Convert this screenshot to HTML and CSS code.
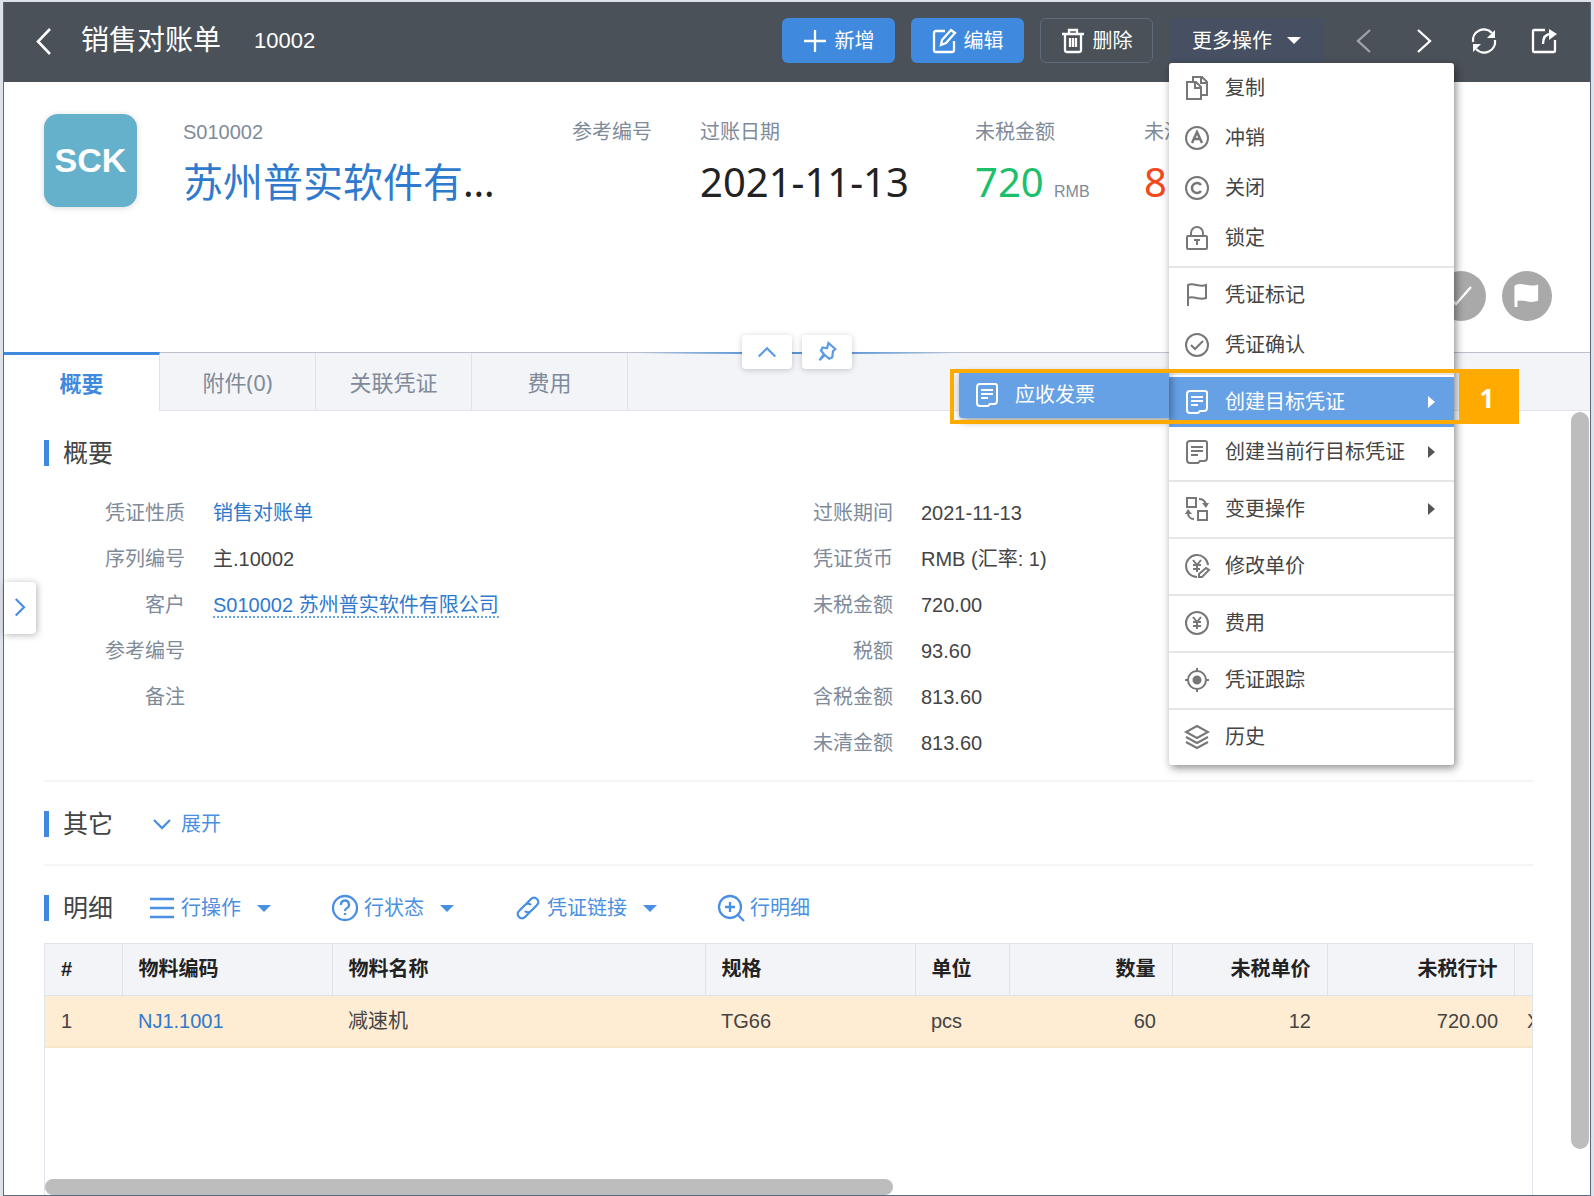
FILE: index.html
```html
<!DOCTYPE html>
<html lang="zh-CN">
<head>
  <meta charset="UTF-8" />
  <meta name="viewport" content="width=device-width, initial-scale=1" />
  <title>销售对账单 10002</title>
  <link rel="stylesheet" href="styles.css">
</head>
<body>
  <div class="window">
    <header class="topbar">
      <button class="back" aria-label="返回">
        <svg class="icon" viewBox="0 0 24 24"><path d="M19 0 7 12.500l12 12.500" stroke-width="2.600" /></svg>
      </button>
      <h1>销售对账单</h1>
      <span class="doc-no">10002</span>

      <div class="actions">
        <button class="btn btn-primary">
          <svg class="icon" viewBox="0 0 24 24"><path d="M12 1v22M1 12h22" /></svg>新增
        </button>
        <button class="btn btn-primary">
          <svg class="icon" viewBox="0 0 24 24"><path d="M13 2H4a2 2 0 0 0-2 2v17a2 2 0 0 0 2 2h16a2 2 0 0 0 2-2v-9M9 16l1-5L19 1l4 3-9 10z" /></svg>编辑
        </button>
        <button class="btn btn-ghost">
          <svg class="icon" viewBox="0 0 24 24"><path d="M1 5h22M8 5V1h8v4M4 5v16a2 2 0 0 0 2 2h12a2 2 0 0 0 2-2V5M9 9v9M12 9v9M15 9v9" /></svg>删除
        </button>
        <div class="more">
          <button class="btn btn-more">更多操作<span class="caret"></span></button>

          <ul class="menu">
            <li><button>
              <svg class="icon" viewBox="0 0 24 24"><path d="M2 6h9l5 5v12H2zM10 6v6h6M8 6V1h9l5 5v13h-6M16 1v6h6" /></svg>复制
            </button></li>
            <li><button>
              <svg class="icon" viewBox="0 0 24 24"><circle cx="12" cy="12" r="11" /><path d="m7 17 5-11 5 11M9 13h6" stroke-width="2.5" /></svg>冲销
            </button></li>
            <li><button>
              <svg class="icon" viewBox="0 0 24 24"><circle cx="12" cy="12" r="11" /><path d="M16 9a5 5 0 1 0 0 6" stroke-width="2.5" /></svg>关闭
            </button></li>
            <li><button>
              <svg class="icon" viewBox="0 0 24 24"><rect x="2" y="10" width="20" height="13" rx="1" /><path d="M6 10V7a6 6 0 0 1 12 0v3M9 14h6M12 14v5" /></svg>锁定
            </button></li>
            <li class="divider"></li>
            <li><button>
              <svg class="icon" viewBox="0 0 24 24"><path d="M3 23V2c6-3 11 3 18 0v13c-7 3-12-3-18 0" /></svg>凭证标记
            </button></li>
            <li><button>
              <svg class="icon" viewBox="0 0 24 24"><circle cx="12" cy="12" r="11" /><path d="m6 12 4 4 8-8" /></svg>凭证确认
            </button></li>
            <li class="divider"></li>
            <li class="active">
              <button>
                <svg class="icon" viewBox="0 0 24 24"><path d="M5 1h15a2 2 0 0 1 2 2v15a3 3 0 0 1-3 3h-4l-2 2H5a3 3 0 0 1-3-3V4a3 3 0 0 1 3-3zM6 7h12M6 11h12M6 15h7" /></svg>创建目标凭证<span class="arrow"></span>
              </button>
              <ul class="submenu">
                <li><button>
                  <svg class="icon" viewBox="0 0 24 24"><path d="M5 1h15a2 2 0 0 1 2 2v15a3 3 0 0 1-3 3h-4l-2 2H5a3 3 0 0 1-3-3V4a3 3 0 0 1 3-3zM6 7h12M6 11h12M6 15h7" /></svg>应收发票
                </button></li>
              </ul>
              <div class="callout"><span>1</span></div>
            </li>
            <li><button>
              <svg class="icon" viewBox="0 0 24 24"><path d="M5 1h15a2 2 0 0 1 2 2v15a3 3 0 0 1-3 3h-4l-2 2H5a3 3 0 0 1-3-3V4a3 3 0 0 1 3-3zM6 7h12M6 11h12M6 15h7" /></svg>创建当前行目标凭证<span class="arrow"></span>
            </button></li>
            <li class="divider"></li>
            <li><button>
              <svg class="icon" viewBox="0 0 24 24"><path d="M2 1h9v9H2zM13 14h9v9h-9zM14 2c4 0 6 2 7 5M9 22c-4 0-6-3-6-6" /><path d="M17 6h7l-3 5zM0 17h7l-4-5z" fill="currentColor" stroke="none" /></svg>变更操作<span class="arrow"></span>
            </button></li>
            <li class="divider"></li>
            <li><button>
              <svg class="icon" viewBox="0 0 24 24"><path d="M12 23A11 11 0 1 1 23 11M8 6l4 5 4-5M8 11h8M8 15h7M12 11v7M14 20l7-6 3 2-7 7h-3z" /></svg>修改单价
            </button></li>
            <li class="divider"></li>
            <li><button>
              <svg class="icon" viewBox="0 0 24 24"><circle cx="12" cy="12" r="11" /><path d="m8 6 4 5 4-5M8 11h8M8 15h8M12 11v7" /></svg>费用
            </button></li>
            <li class="divider"></li>
            <li><button>
              <svg class="icon" viewBox="0 0 24 24"><circle cx="12" cy="12" r="9" /><circle cx="12" cy="12" r="3.500" fill="currentColor" /><path d="M12 0v4M12 20v4M0 12h4M20 12h4" /></svg>凭证跟踪
            </button></li>
            <li class="divider"></li>
            <li><button>
              <svg class="icon" viewBox="0 0 24 24"><path d="m12 1 11 6-11 6L1 7zM1 12l11 6 11-6M1 17l11 6 11-6" /></svg>历史
            </button></li>
          </ul>
        </div>

        <div class="tools">
          <button aria-label="上一条" disabled>
            <svg class="icon" viewBox="0 0 24 24"><path d="M18 1 6 12l12 11" /></svg>
          </button>
          <button aria-label="下一条">
            <svg class="icon" viewBox="0 0 24 24"><path d="m6 1 12 11L6 23" /></svg>
          </button>
          <button aria-label="刷新">
            <svg class="icon" viewBox="0 0 24 24"><path d="M1 13A11 11 0 0 1 20 4M23 11A11 11 0 0 1 4 20" /><path d="M23 1v8h-8zM1 23v-8h8z" fill="currentColor" stroke="none" /></svg>
          </button>
          <button aria-label="分享">
            <svg class="icon" viewBox="0 0 24 24"><path d="M13 1H2a1 1 0 0 0-1 1v20a1 1 0 0 0 1 1h20a1 1 0 0 0 1-1V11M11 15c0-6 2-10 8-10" /><path d="m17 0 8 5-8 6z" fill="currentColor" stroke="none" /></svg>
          </button>
        </div>
      </div>
    </header>

    <section class="summary">
      <div class="avatar">SCK</div>
      <div class="facts">
        <div>
          <p class="fact-label">S010002</p>
          <p class="fact-value name"><a href="#">苏州普实软件有限公司</a></p>
        </div>
        <div>
          <p class="fact-label">参考编号</p>
        </div>
        <div>
          <p class="fact-label">过账日期</p>
          <p class="fact-value">2021-11-13</p>
        </div>
        <div>
          <p class="fact-label">未税金额</p>
          <p class="fact-value green">720 <small>RMB</small></p>
        </div>
        <div>
          <p class="fact-label">未清金额</p>
          <p class="fact-value red">813.60</p>
        </div>
      </div>
      <div class="flags">
        <button aria-label="确认"><svg class="icon" viewBox="0 0 24 24"><path d="m1 13 7 7L23 3" /></svg></button>
        <button aria-label="标记"><svg class="icon" viewBox="0 0 24 24"><path d="M2 23V2" stroke-width="3" /><path d="M2 2c7-3 12 3 21 0v14c-9 3-14-3-21 0z" fill="currentColor" /></svg></button>
      </div>
    </section>

    <nav class="tabs">
      <button class="tab current">概要</button>
      <button class="tab">附件(0)</button>
      <button class="tab">关联凭证</button>
      <button class="tab">费用</button>
      <div class="fold">
        <button aria-label="收起"><svg class="icon" viewBox="0 0 24 24"><path d="m1 18 11-11 11 11" /></svg></button>
        <button aria-label="固定"><svg class="icon" viewBox="0 0 24 24"><path d="m14 0 9 8-3 3-1 8-4 2-6-5-7 7 6-8-4-5 2-4 6 1z" /></svg></button>
      </div>
    </nav>

    <main class="body">
      <button class="drawer" aria-label="展开侧栏"><svg class="icon" viewBox="0 0 24 24"><path d="m5 0 11 11L5 22" /></svg></button>

      <div class="content">
        <section class="block overview">
          <div class="block-head"><h2>概要</h2></div>
          <div class="info">
            <dl>
              <dt>凭证性质</dt><dd><a href="#">销售对账单</a></dd>
              <dt>序列编号</dt><dd>主.10002</dd>
              <dt>客户</dt><dd><a class="dotted" href="#">S010002 苏州普实软件有限公司</a></dd>
              <dt>参考编号</dt><dd></dd>
              <dt>备注</dt><dd></dd>
            </dl>
            <dl>
              <dt>过账期间</dt><dd>2021-11-13</dd>
              <dt>凭证货币</dt><dd>RMB (汇率: 1)</dd>
              <dt>未税金额</dt><dd>720.00</dd>
              <dt>税额</dt><dd>93.60</dd>
              <dt>含税金额</dt><dd>813.60</dd>
              <dt>未清金额</dt><dd>813.60</dd>
            </dl>
          </div>
        </section>

        <section class="block">
          <div class="block-head">
            <h2>其它</h2>
            <button class="link-btn"><svg class="icon" viewBox="0 0 24 24"><path d="m4 8 8 8 8-8" /></svg>展开</button>
          </div>
        </section>

        <section class="block details">
          <div class="block-head">
            <h2>明细</h2>
            <button class="link-btn"><svg class="icon" viewBox="0 0 24 24"><path d="M0 3h24M0 12h24M0 21h24" /></svg>行操作<span class="caret"></span></button>
            <button class="link-btn"><svg class="icon" viewBox="0 0 24 24"><circle cx="12" cy="12" r="12" /><path d="M8 9a4 4 0 1 1 6 3q-2 1-2 3M12 17v2" /></svg>行状态<span class="caret"></span></button>
            <button class="link-btn"><svg class="icon" viewBox="0 0 24 24"><path d="m10 8 5-5a4 4 0 0 1 6 6l-6 6a4 4 0 0 1-6 0M14 16l-5 5a4 4 0 0 1-6-6l6-6a4 4 0 0 1 6 0" /></svg>凭证链接<span class="caret"></span></button>
            <button class="link-btn"><svg class="icon" viewBox="0 0 24 24"><circle cx="11" cy="11" r="11" /><path d="m18 18 7 7M11 6v10M6 11h10" /></svg>行明细</button>
          </div>

          <div class="grid-wrap">
            <table>
              <colgroup>
                <col class="c-no"><col class="c-code"><col class="c-name"><col class="c-spec"><col class="c-unit">
                <col class="c-qty"><col class="c-price"><col class="c-total"><col class="c-tax">
              </colgroup>
              <thead>
                <tr>
                  <th>#</th><th>物料编码</th><th>物料名称</th><th>规格</th><th>单位</th>
                  <th class="num">数量</th><th class="num">未税单价</th><th class="num">未税行计</th><th></th>
                </tr>
              </thead>
              <tbody>
                <tr>
                  <td>1</td><td><a href="#">NJ1.1001</a></td><td>减速机</td><td>TG66</td><td>pcs</td>
                  <td class="num">60</td><td class="num">12</td><td class="num">720.00</td><td class="tax">X</td>
                </tr>
              </tbody>
            </table>
            <div class="hscroll"></div>
          </div>
        </section>
      </div>

      <div class="vscroll"></div>
    </main>
  </div>
</body>
</html>
```

FILE: styles.css
```css
* {
  box-sizing: border-box;
}
body {
  margin: 0;
  padding: 2px 3px 0;
  background: #dde1e8;
  color: #444;
  font: 20px/30px "Liberation Sans", "Noto Sans CJK SC", sans-serif;
}
h1, h2, p, ul, dl, dd {
  margin: 0;
  padding: 0;
  font-weight: normal;
}
ul {
  list-style: none;
}
button {
  border: 0;
  padding: 0;
  background: none;
  color: inherit;
  font: inherit;
  cursor: pointer;
}
a {
  color: #2f7acd;
  text-decoration: none;
}
.icon {
  display: block;
  flex: none;
  width: 24px;
  height: 24px;
  fill: none;
  stroke: currentColor;
  stroke-width: 2.3;
  overflow: visible;
}
.caret {
  border: 7px solid transparent;
  border-top-color: currentColor;
  border-bottom: 0;
}
.window {
  display: flex;
  flex-direction: column;
  height: calc(100vh - 2px);
  border: 1px solid #5b6a7d;
  border-top: 0;
  background: #fff;
}

/* 顶部工具栏 */
.topbar {
  display: flex;
  align-items: center;
  height: 80px;
  padding: 0 34px 3px 27px;
  background: #4a5158;
  color: #fff;
}
.topbar h1 {
  margin-left: 26px;
  font-size: 28px;
}
.doc-no {
  margin-left: 33px;
  font-size: 22px;
}
.actions {
  display: flex;
  gap: 16px;
  margin-left: auto;
}
.btn {
  display: flex;
  align-items: center;
  justify-content: center;
  gap: 8px;
  width: 113px;
  height: 45px;
  border-radius: 6px;
}
.btn-primary {
  background: #3f8ade;
}
.btn-ghost {
  border: 1px solid #5d6b78;
}
.btn-more {
  gap: 15px;
  width: 155px;
  background: #465062;
}
.tools {
  display: flex;
  align-items: center;
  gap: 36px;
  margin-left: 12px;
}
.tools button:disabled {
  color: #a0a4a8;
}

/* 更多操作菜单 */
.more {
  position: relative;
}
.menu {
  position: absolute;
  z-index: 10;
  top: 100%;
  left: 0;
  width: 285px;
  padding-bottom: 3px;
  border-radius: 3px;
  background: #fff;
  box-shadow: 2px 3px 8px rgba(0, 0, 0, 0.45);
  color: #444;
}
.menu li {
  position: relative;
}
.menu button {
  display: flex;
  align-items: center;
  gap: 16px;
  width: 100%;
  height: 50px;
  padding: 0 19px 0 16px;
}
.menu .icon {
  color: #777;
  stroke-width: 2;
}
.menu .divider {
  margin: 3px 0 2px;
  border-top: 2px solid #e6e6e6;
}
.arrow {
  margin-left: auto;
  border: 6px solid transparent;
  border-left: 7px solid #555;
  border-right: 0;
}
.menu .active button {
  background: #66a1e5;
  color: #fff;
}
.menu .active .icon {
  color: #fff;
}
.active .arrow {
  border-left-color: #fff;
}
.submenu {
  position: absolute;
  top: -6px;
  right: 100%;
  width: 210px;
  border-radius: 3px;
  box-shadow: 2px 3px 8px rgba(0, 0, 0, 0.4);
}
.menu .submenu button {
  height: 47px;
  border-radius: 3px 0 0 3px;
}
.callout {
  position: absolute;
  top: -8px;
  left: -219px;
  right: -65px;
  display: flex;
  justify-content: flex-end;
  height: 55px;
  border: 4px solid #ffaa01;
}
.callout span {
  width: 56px;
  background: #ffaa01;
  color: #fff;
  font: bold 26px/50px "Noto Sans", sans-serif;
  text-align: center;
}

/* 单据摘要 */
.summary {
  display: flex;
  flex-wrap: wrap;
  align-content: flex-start;
  height: 270px;
  padding: 32px 38px 0 40px;
}
.avatar {
  width: 93px;
  height: 93px;
  border-radius: 14px;
  background: #65b1cb;
  box-shadow: 0 1px 6px rgba(0, 0, 0, 0.15);
  color: #fff;
  font-size: 34px;
  font-weight: bold;
  line-height: 93px;
  text-align: center;
}
.facts {
  flex: 1;
  display: grid;
  grid-template-columns: 389px 128px 275px 169px 1fr;
  margin-left: 46px;
}
.fact-label {
  margin-top: 3px;
  color: #808b9a;
}
.fact-value {
  margin-top: 7px;
  color: #222;
  font: 40px/56px "Noto Sans", "Noto Sans CJK SC", sans-serif;
}
.name {
  width: 320px;
  overflow: hidden;
  text-overflow: ellipsis;
  white-space: nowrap;
}
.green {
  color: #1cc06b;
}
.red {
  color: #f2481b;
}
.fact-value small {
  color: #808b9a;
  font: 16px "Liberation Sans", sans-serif;
}
.flags {
  display: flex;
  justify-content: flex-end;
  gap: 16px;
  width: 100%;
  margin-top: 61px;
}
.flags button {
  width: 50px;
  height: 50px;
  padding: 12px;
  border-radius: 50%;
  background: #a9a9a9;
  color: #fff;
}

/* 标签页 */
.tabs {
  position: relative;
  display: flex;
  height: 59px;
  border-top: 1px solid #bcc2cc;
  border-bottom: 1px solid #e2e5eb;
  background: #f2f4f8;
}
.tab {
  width: 156px;
  border-right: 1px solid #dfe2e8;
  color: #808b9a;
  font: 22px/56px "Noto Sans", "Noto Sans CJK SC", sans-serif;
}
.tab.current {
  margin: -1px 0;
  border-top: 3px solid #3f8ade;
  background: #fff;
  color: #3f8ade;
  font-weight: bold;
  line-height: 52px;
}
.fold {
  position: absolute;
  top: -18px;
  left: 50%;
  display: flex;
  justify-content: center;
  gap: 10px;
  width: 320px;
  margin-left: -160px;
  background: linear-gradient(90deg, rgba(74, 140, 214, 0), #5a96d8 35%, #5a96d8 65%, rgba(74, 140, 214, 0)) 0 17px / 100% 2px no-repeat;
}
.fold button {
  display: flex;
  align-items: center;
  justify-content: center;
  width: 50px;
  height: 34px;
  border-radius: 4px;
  background: #fff;
  box-shadow: 0 1px 6px rgba(0, 0, 0, 0.2);
  color: #5b9ae6;
}
.fold .icon,
.drawer .icon {
  width: 18px;
  height: 18px;
  stroke-width: 3;
}

/* 内容区 */
.body {
  position: relative;
  flex: 1;
  display: flex;
  min-height: 0;
}
.drawer {
  position: absolute;
  top: 171px;
  left: 0;
  width: 32px;
  height: 52px;
  padding-left: 8px;
  border-radius: 0 4px 4px 0;
  background: #fff;
  box-shadow: 1px 1px 7px rgba(0, 0, 0, 0.3);
  color: #4a90e2;
}
.content {
  flex: 1;
  display: flex;
  flex-direction: column;
  min-width: 0;
  padding: 0 38px 0 40px;
}
.vscroll {
  width: 18px;
  margin: 1px 1px 46px 0;
  border-radius: 9px;
  background: #bdbdbd;
}
.block {
  padding: 27px 0 25px;
  border-bottom: 2px solid #f4f5f7;
}
.block-head {
  display: flex;
  align-items: center;
  height: 30px;
}
.block-head h2 {
  width: 106px;
  padding-left: 14px;
  border-left: 5px solid #3f8ade;
  font-size: 25px;
  line-height: 26px;
}
.link-btn {
  display: flex;
  align-items: center;
  gap: 7px;
  margin-right: 62px;
  color: #4a90e2;
}
.link-btn .caret {
  margin-left: 9px;
}
.overview {
  padding-bottom: 14px;
}
.info {
  display: flex;
  margin-top: 22px;
}
.info dl {
  flex: 1;
  display: grid;
  grid-template-columns: 141px 1fr;
  grid-auto-rows: 46px;
  column-gap: 28px;
  align-items: center;
  align-content: start;
}
.info dl:first-child {
  flex: 0 0 708px;
}
.info dt {
  color: #808b9a;
  text-align: right;
}
.dotted {
  border-bottom: 2px dotted #6ba3e4;
}

/* 明细表格 */
.details {
  flex: 1;
  display: flex;
  flex-direction: column;
  min-height: 0;
  padding-bottom: 0;
  border-bottom: 0;
}
.grid-wrap {
  flex: 1;
  display: flex;
  flex-direction: column;
  margin-top: 20px;
  border: 1px solid #e0e3e9;
  border-bottom: 0;
  overflow: hidden;
}
table {
  width: 1570px;
  border-collapse: collapse;
  table-layout: fixed;
}
.c-no { width: 77px; }
.c-code { width: 210px; }
.c-name { width: 373px; }
.c-spec { width: 210px; }
.c-unit { width: 94px; }
.c-qty { width: 163px; }
.c-price { width: 155px; }
.c-total { width: 187px; }
th, td {
  height: 52px;
  padding: 0 16px;
  text-align: left;
}
th {
  height: 51px;
  border-right: 1px solid #dfe2e8;
  border-bottom: 1px solid #dfe2e8;
  background: #f2f4f8;
  color: #222;
}
td {
  border-bottom: 2px solid #f8e4c6;
  background: #feecd3;
}
.num {
  text-align: right;
}
.tax {
  padding-left: 13px;
}
.hscroll {
  width: 57%;
  height: 16px;
  margin-top: auto;
  border-radius: 8px;
  background: #bdbdbd;
}
```
